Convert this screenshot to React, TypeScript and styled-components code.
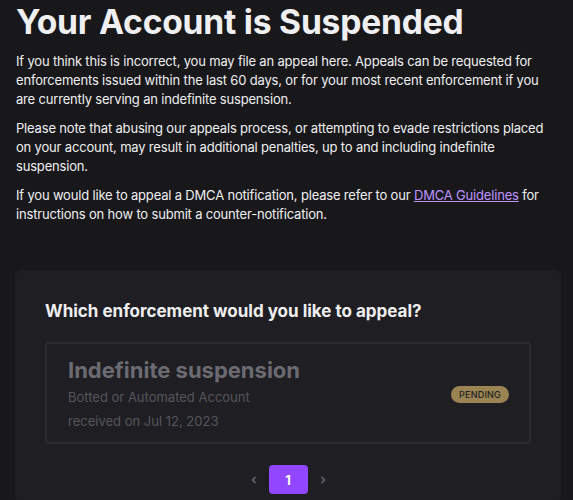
import styled, { createGlobalStyle } from "styled-components";

const Global = createGlobalStyle`
  html, body {
    margin: 0;
    padding: 0;
    background: #18181b;
    font-family: Inter, "Noto Sans", sans-serif;
    color: #efeff1;
  }
`;

const Page = styled.div`
  width: 573px;
  height: 500px;
  overflow: hidden;
  padding: 0 12px 0 15px;
  box-sizing: border-box;
`;

const Title = styled.h1`
  margin: 0;
  padding: 2px 0 0 1px;
  font-size: 33.6px;
  line-height: 40px;
  font-weight: 700;
  letter-spacing: -0.2px;
`;

const Text = styled.p`
  margin: 10px 0 0;
  padding-left: 1px;
  font-size: 13px;
  line-height: 19px;
  letter-spacing: -0.18px;
  color: #efeff1;
`;

const Link = styled.a`
  color: #bf94ff;
  text-decoration: underline;
`;

const Panel = styled.section`
  margin-top: 46px;
  background: #1f1f23;
  border-radius: 6px;
  padding: 30px 30px 8px;
`;

const Heading = styled.h2`
  margin: 0 0 20px;
  font-size: 17px;
  line-height: 22px;
  font-weight: 700;
`;

const Card = styled.div`
  display: flex;
  align-items: center;
  justify-content: space-between;
  border: 2px solid #2a2a2f;
  border-radius: 4px;
  padding: 11px 20px 9px 21px;
`;

const Info = styled.div`
  display: flex;
  flex-direction: column;
`;

const CardTitle = styled.div`
  font-size: 22px;
  line-height: 30px;
  font-weight: 700;
  color: #6b6b71;
`;

const Sub = styled.div`
  font-size: 13px;
  line-height: 24px;
  color: #55555b;
`;

const Badge = styled.span`
  background: #9a8453;
  color: #1f1f23;
  border-radius: 9px;
  font-size: 9px;
  font-weight: 500;
  line-height: 17px;
  padding: 0 8px;
  letter-spacing: 0.2px;
`;

const Pager = styled.div`
  display: flex;
  justify-content: center;
  align-items: center;
  gap: 8px;
  margin-top: 21px;
`;

const Arrow = styled.span`
  display: flex;
  width: 14px;
  justify-content: center;
  color: #5c5c66;
`;

const PageButton = styled.button<{ $active?: boolean }>`
  width: 39px;
  height: 29px;
  border: none;
  border-radius: 4px;
  background: ${(p) => (p.$active ? "#9147ff" : "transparent")};
  color: #ffffff;
  font-family: Inter, sans-serif;
  font-size: 13px;
  font-weight: 700;
`;

const Chevron = ({ dir }: { dir: "left" | "right" }) => (
  <svg width="10" height="10" viewBox="0 0 10 10">
    <path
      d={dir === "left" ? "M6.5 2 L3.5 5 L6.5 8" : "M3.5 2 L6.5 5 L3.5 8"}
      fill="none"
      stroke="currentColor"
      strokeWidth="1.8"
    />
  </svg>
);

export default function App() {
  return (
    <Page>
      <Global />
      <Title>Your Account is Suspended</Title>
      <Text>
        If you think this is incorrect, you may file an appeal here. Appeals can be requested for
        enforcements issued within the last 60 days, or for your most recent enforcement if you
        are currently serving an indefinite suspension.
      </Text>
      <Text>
        Please note that abusing our appeals process, or attempting to evade restrictions placed
        on your account, may result in additional penalties, up to and including indefinite
        suspension.
      </Text>
      <Text>
        If you would like to appeal a DMCA notification, please refer to our{" "}
        <Link href="#">DMCA Guidelines</Link> for instructions on how to submit a
        counter-notification.
      </Text>
      <Panel>
        <Heading>Which enforcement would you like to appeal?</Heading>
        <Card>
          <Info>
            <CardTitle>Indefinite suspension</CardTitle>
            <Sub>Botted or Automated Account</Sub>
            <Sub>received on Jul 12, 2023</Sub>
          </Info>
          <Badge>PENDING</Badge>
        </Card>
        <Pager>
          <Arrow>
            <Chevron dir="left" />
          </Arrow>
          <PageButton $active>1</PageButton>
          <Arrow>
            <Chevron dir="right" />
          </Arrow>
        </Pager>
      </Panel>
    </Page>
  );
}
